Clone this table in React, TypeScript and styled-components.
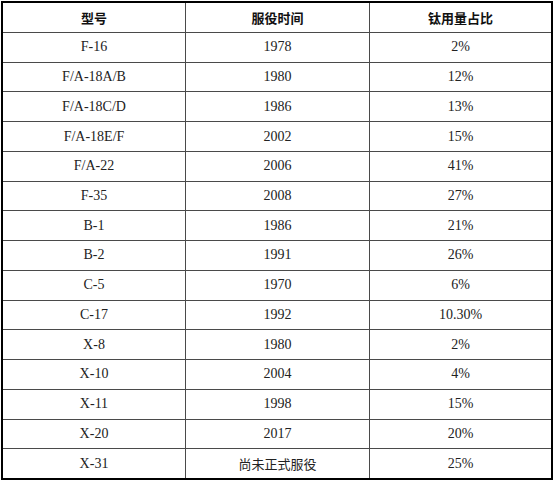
import React from "react";
import styled, { createGlobalStyle } from "styled-components";

const GlobalStyle = createGlobalStyle`
  html, body {
    margin: 0;
    padding: 0;
    background: #ffffff;
  }
`;

interface Row {
  model: string;
  year: string;
  ratio: string;
}

const rows: Array<Row> = [
  { model: "F-16", year: "1978", ratio: "2%" },
  { model: "F/A-18A/B", year: "1980", ratio: "12%" },
  { model: "F/A-18C/D", year: "1986", ratio: "13%" },
  { model: "F/A-18E/F", year: "2002", ratio: "15%" },
  { model: "F/A-22", year: "2006", ratio: "41%" },
  { model: "F-35", year: "2008", ratio: "27%" },
  { model: "B-1", year: "1986", ratio: "21%" },
  { model: "B-2", year: "1991", ratio: "26%" },
  { model: "C-5", year: "1970", ratio: "6%" },
  { model: "C-17", year: "1992", ratio: "10.30%" },
  { model: "X-8", year: "1980", ratio: "2%" },
  { model: "X-10", year: "2004", ratio: "4%" },
  { model: "X-11", year: "1998", ratio: "15%" },
  { model: "X-20", year: "2017", ratio: "20%" },
  { model: "X-31", year: "尚未正式服役", ratio: "25%" },
];

const Page = styled.div`
  padding: 1px;
`;

const Grid = styled.div`
  width: 548px;
  height: 475px;
  border: 2px solid #000;
  background: #4a4a4a;
  display: grid;
  grid-template-columns: 182px 183px 181px;
  grid-template-rows: 29px repeat(15, 1fr);
  gap: 1px;
`;

const HeadCell = styled.div`
  background: #fff;
  display: flex;
  align-items: center;
  justify-content: center;
  font-family: "Noto Sans CJK SC", sans-serif;
  font-weight: 700;
  font-size: 13px;
  color: #111;
`;

const Cell = styled.div<{ cjk?: boolean }>`
  background: #fff;
  display: flex;
  align-items: center;
  justify-content: center;
  font-family: ${p => (p.cjk ? '"Noto Sans CJK SC", sans-serif' : '"Liberation Serif", serif')};
  font-size: ${p => (p.cjk ? "13px" : "14px")};
  color: #222;
`;

const isCjk = (s: string) => /[\u4e00-\u9fff]/.test(s);

export default function App() {
  return (
    <Page>
      <GlobalStyle />
      <Grid>
        <HeadCell>型号</HeadCell>
        <HeadCell>服役时间</HeadCell>
        <HeadCell>钛用量占比</HeadCell>
        {rows.map(r => (
          <React.Fragment key={r.model}>
            <Cell>{r.model}</Cell>
            <Cell cjk={isCjk(r.year)}>{r.year}</Cell>
            <Cell>{r.ratio}</Cell>
          </React.Fragment>
        ))}
      </Grid>
    </Page>
  );
}
